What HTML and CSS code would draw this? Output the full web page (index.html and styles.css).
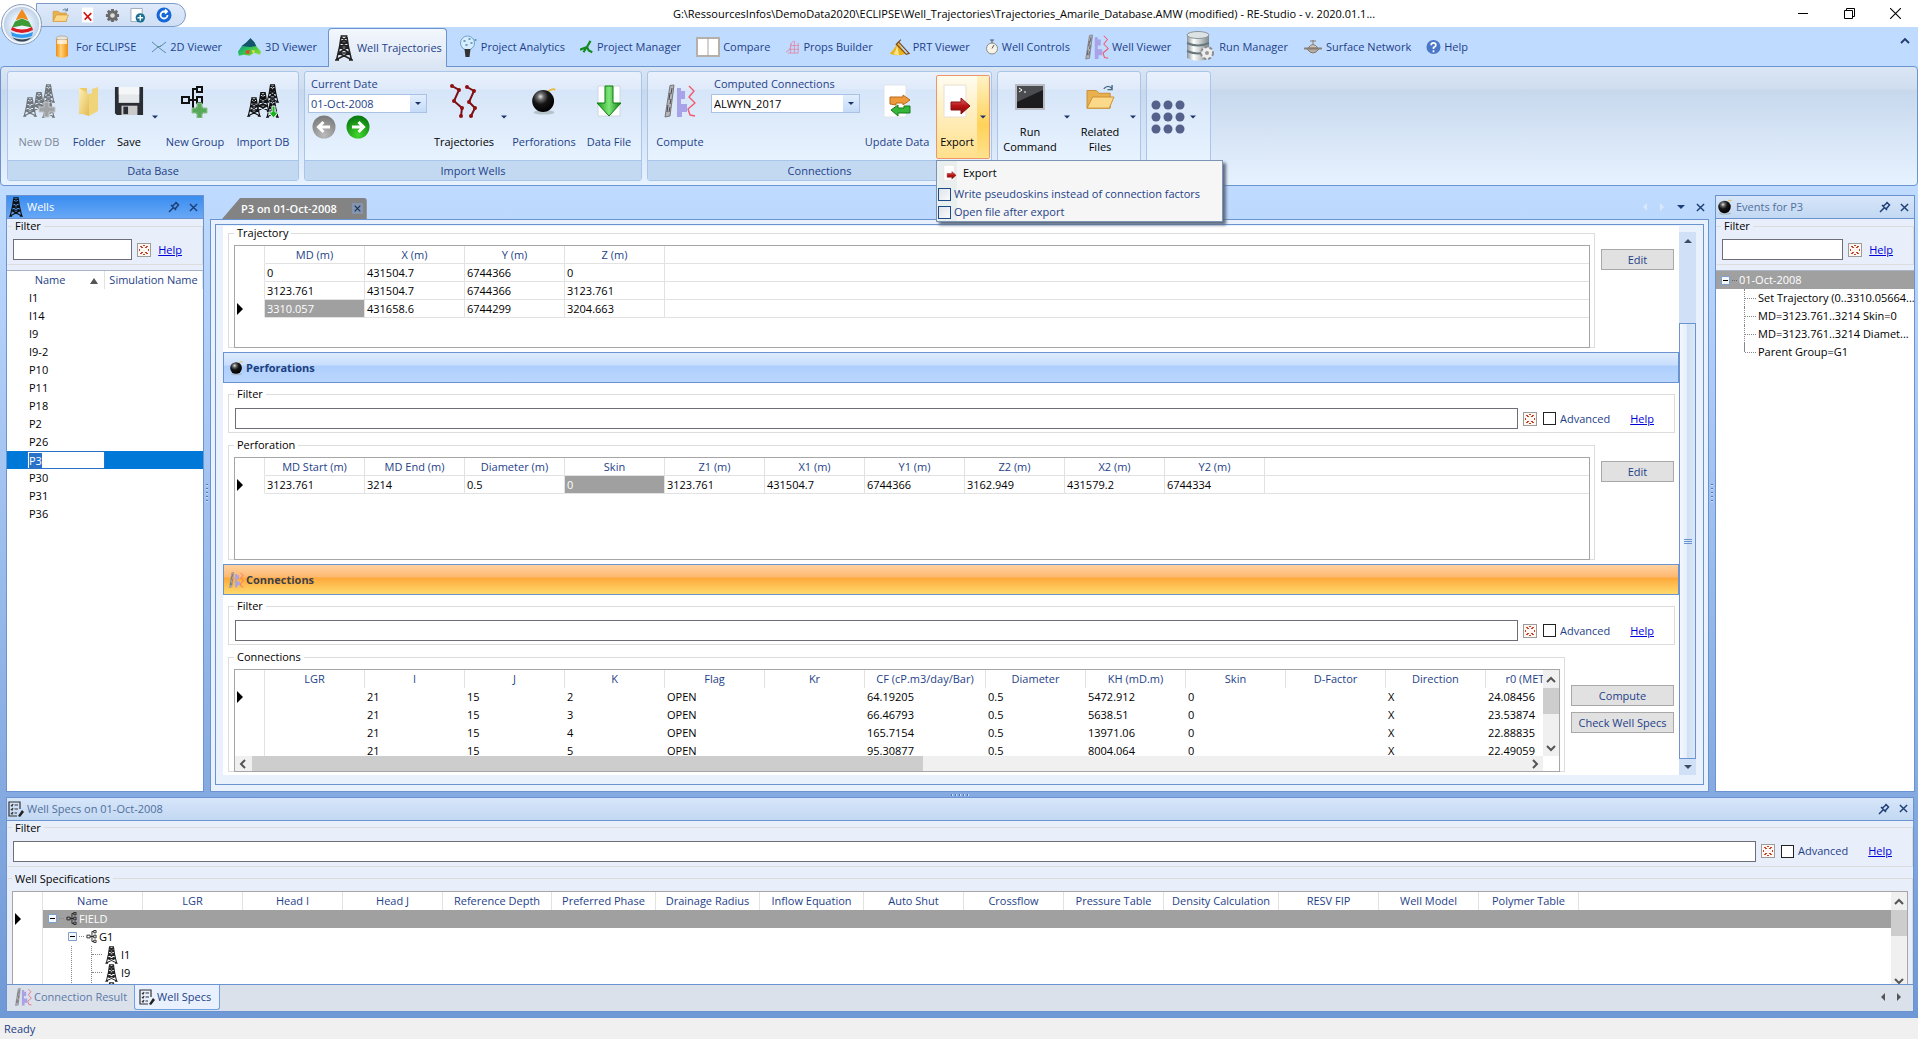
FILE: index.html
```html
<!DOCTYPE html>
<html lang="en">
<head>
<meta charset="utf-8">
<title>RE-Studio</title>
<link rel="stylesheet" href="styles.css">
</head>
<body>

<svg class="defs" aria-hidden="true">
  <defs>
    <radialGradient id="gBall" cx=".38" cy=".3" r=".7"><stop offset="0" stop-color="#e4e4e4"/><stop offset=".22" stop-color="#6a6a6a"/><stop offset=".5" stop-color="#161616"/><stop offset="1" stop-color="#000"/></radialGradient>
    <linearGradient id="gFolder" x1="0" y1="0" x2="1" y2="1"><stop offset="0" stop-color="#fdf0b8"/><stop offset="1" stop-color="#e3bb50"/></linearGradient>
    <linearGradient id="gRed" x1="0" y1="0" x2="0" y2="1"><stop offset="0" stop-color="#e06a6a"/><stop offset=".5" stop-color="#b81414"/><stop offset="1" stop-color="#7c0808"/></linearGradient>
    <linearGradient id="gGreen" x1="0" y1="0" x2="1" y2="0"><stop offset="0" stop-color="#169a16"/><stop offset=".5" stop-color="#7fe67a"/><stop offset="1" stop-color="#0d7f10"/></linearGradient>
    <linearGradient id="gSilver" x1="0" y1="0" x2="1" y2="0"><stop offset="0" stop-color="#8d9598"/><stop offset=".3" stop-color="#fff"/><stop offset="1" stop-color="#7f898c"/></linearGradient>
    <linearGradient id="gOrange" x1="0" y1="0" x2="1" y2="0"><stop offset="0" stop-color="#ef8b12"/><stop offset=".4" stop-color="#ffd27a"/><stop offset="1" stop-color="#f08d10"/></linearGradient>
    <radialGradient id="gGreenBall" cx=".5" cy=".85" r=".8"><stop offset="0" stop-color="#43d62c"/><stop offset="1" stop-color="#0a7a12"/></radialGradient>
    <radialGradient id="gGrayBall" cx=".5" cy=".85" r=".8"><stop offset="0" stop-color="#bbb"/><stop offset="1" stop-color="#7c7c7c"/></radialGradient>
    <linearGradient id="gMesh" x1="0" y1="0" x2="1" y2="1"><stop offset="0" stop-color="#1c6fae"/><stop offset=".5" stop-color="#28c05a"/><stop offset="1" stop-color="#9be02a"/></linearGradient>
  </defs>
  <symbol id="rig" viewBox="0 0 18 26"><g fill="none" stroke="currentColor" stroke-width="1.500"><path d="M5.500 1h7M6 2 4.500 12 1.500 25M12 2l1.500 10 3 13M5.500 7h7M4.500 12h9M3.500 18h11M6 2l6.500 5M12 2 5.500 7M5.500 7l8 5M12.500 7l-8 5M4.500 12l10 6M13.500 12l-10 6M3.500 18l12 6M14.500 18l-12 6M0 25h4M14 25h4"/></g></symbol>
  <symbol id="rigs" viewBox="0 0 34 34"><use href="#rig" x="20" y="0" width="13" height="19"/><use href="#rig" x="20" y="15" width="13" height="19"/><use href="#rig" x="10" y="6" width="14" height="24"/><use href="#rig" x="1" y="13" width="14" height="20"/></symbol>
  <symbol id="rigs-add" viewBox="0 0 34 34"><g color="#6f7478"><use href="#rigs"/></g><path d="M22 18h5v5h6v5h-6v5h-5v-5h-5v-5h5z" fill="#a0a3a6" stroke="#c5c8ca"/></symbol>
  <symbol id="rigs-down" viewBox="0 0 34 34"><use href="#rigs"/><path d="M26 22h3v6h3.500L27.500 34l-5-6H26z" fill="#18b418" stroke="#e8f2ff"/></symbol>
  <symbol id="conn" viewBox="0 0 32 34"><path d="M6 1.500l4-.5-4 31-5 1z" fill="#b4b4b8" stroke="#77777c"/><path d="M8 4l-1 6M6 9l-1 7M7 15l-1 5M4 21l-1 7M6 23l-1 5" stroke="#4a4a50"/><path d="M13 4h4v3h4v8h-4v5h6v8h-5v5h-5z" fill="#a8a2e8"/><path d="M25 2l5 5-5 6 6 6-7 6 2 6 5 1" fill="none" stroke="#f25a70" stroke-width="1.400" stroke-linejoin="round"/></symbol>
  <symbol id="bomb" viewBox="0 0 32 32"><ellipse cx="16" cy="29" rx="12" ry="2.500" fill="#9aa" opacity=".6"/><path d="M21 5q4-4 8-2" fill="none" stroke="#eab73c" stroke-width="2"/><circle cx="15" cy="16" r="12.500" fill="url(#gBall)"/></symbol>
  <symbol id="folder" viewBox="0 0 26 32"><path d="M3 3h8v26H3z" fill="#ecca64"/><path d="M3 3l10 6v22L3 28z" fill="url(#gFolder)"/><path d="M13 9l3-1V4l6-2v24l-9 5z" fill="#f0d47a"/></symbol>
  <symbol id="folder-open" viewBox="0 0 32 28"><path d="M2 26V7h10l3 3h12v16z" fill="#e8b04e" stroke="#c98d2c"/><path d="M2 26 8 14h23l-5 12z" fill="#fbd98b" stroke="#c98d2c"/><path d="M20 5q5-5 9 0m0-4v5h-5" fill="none" stroke="#456a86" stroke-width="1.500"/></symbol>
  <symbol id="floppy" viewBox="0 0 32 32"><path d="M1 1h30v30H3l-2-2z" fill="#2b2d35"/><path d="M5 1h22v17H5z" fill="#e4e8ea"/><path d="M5 1h22v8H5z" fill="#fff" opacity=".6"/><path d="M8 21h17v10H8z" fill="#c9c9c9"/><path d="M10 22h5v8h-5z" fill="#2b2d35"/></symbol>
  <symbol id="tree" viewBox="0 0 24 30"><g fill="none" stroke="currentColor" stroke-width="2"><path d="M2 12h7v6H2zM17 2h5v5h-5zM17 12h5v6h-5zM17 23h5v5h-5zM9 15h8M17 4h-4v22h4"/></g></symbol>
  <symbol id="tree-add" viewBox="0 0 30 34"><use href="#tree" width="24" height="32"/><path d="M17 19h5v5h5v5h-5v5h-5v-5h-5v-5h5z" fill="#58a85a" stroke="#8fc48f"/></symbol>
  <symbol id="traj" viewBox="0 0 30 34"><g fill="#8f1010" stroke="#7c1014" stroke-width="2"><path d="M3 2l7 4-5 11 8 7-1 8M18 3l7 4-5 11 6 6-4 8" fill="none"/></g><g fill="#8f1010"><circle cx="3" cy="2" r="2"/><circle cx="10" cy="6" r="2"/><circle cx="5" cy="17" r="2"/><circle cx="13" cy="24" r="2"/><circle cx="12" cy="32" r="2"/><circle cx="18" cy="3" r="2"/><circle cx="25" cy="7" r="2"/><circle cx="20" cy="18" r="2"/><circle cx="26" cy="24" r="2"/><circle cx="22" cy="32" r="2"/></g></symbol>
  <symbol id="data-file" viewBox="0 0 30 32"><path d="M4 1h22v30H4z" fill="#fff" stroke="#d0d6de"/><path d="M11 1h8v17h8L15 31 3 18h8z" fill="url(#gGreen)" stroke="#0c7c10"/></symbol>
  <symbol id="update" viewBox="0 0 30 34"><path d="M2 1h22v32H2z" fill="#fff" stroke="#dfe4ea"/><path d="M8 20v-7h13v-2l7 5-7 5v-2h-7v2z" fill="#ef9a3a" stroke="#b8691a"/><path d="M28 22v7H16v3l-7-6 7-5v3h6v-2z" fill="#35b53a" stroke="#167a1a"/></symbol>
  <symbol id="export" viewBox="0 0 28 34"><path d="M1 1h22v32H1z" fill="#fff" stroke="#e6e0d2"/><path d="M8 18h10v-4l9 8-9 8v-4H8z" fill="url(#gRed)" stroke="#8a1212"/></symbol>
  <symbol id="console" viewBox="0 0 30 26"><path d="M1 1h28v24H1z" fill="#1c1c1e" stroke="#b9bcc2" stroke-width="2"/><path d="M2 18 28 6V2H2z" fill="#4a4c50"/><path d="M4 4l3 2-3 2M9 8h2" stroke="#fff" fill="none"/></symbol>
  <symbol id="dots" viewBox="0 0 34 34"><g fill="#55618a"><circle cx="5" cy="5" r="4.500"/><circle cx="17" cy="5" r="4.500"/><circle cx="29" cy="5" r="4.500"/><circle cx="5" cy="17" r="4.500"/><circle cx="17" cy="17" r="4.500"/><circle cx="29" cy="17" r="4.500"/><circle cx="5" cy="29" r="4.500"/><circle cx="17" cy="29" r="4.500"/><circle cx="29" cy="29" r="4.500"/></g></symbol>
  <symbol id="specs" viewBox="0 0 16 16"><g fill="none" stroke="#333" stroke-width="1.200"><path d="M12 8V1H1v14h8M3 4l1 1 1-2M6.500 4H10M3 8l1 1 1-2M6.500 8H10M3 12l1 1 1-2M6.500 12H9"/></g><path d="M14 9l2 2-4 5-2-1z" fill="#222"/></symbol>
  <symbol id="pin" viewBox="0 0 12 12"><path d="M7.500 1l3.500 3.500M3 4l5 5M5 7 1 11M4.500 5l4-3.500M7 8l3.500-4" stroke="currentColor" stroke-width="1.500" fill="none"/></symbol>
  <symbol id="close" viewBox="0 0 10 10"><path d="M1 1l8 8M9 1 1 9" stroke="currentColor" stroke-width="1.600" fill="none"/></symbol>
  <symbol id="clear" viewBox="0 0 12 12"><path d="M0 0h12v12H0z" fill="#fff6f2"/><g fill="#c0452a"><path d="M2 2h2v1H2zM3 3h2v1H3zM8 2h2v1H8zM7 3h2v1H7zM5 1h2v1H5zM1 5h1v2H1zM10 5h1v2h-1zM3 8h2v1H3zM2 9h2v1H2zM7 8h2v1H7zM8 9h2v1H8zM5 10h2v1H5z"/></g></symbol>
  <symbol id="chev" viewBox="0 0 10 8"><path d="M1 6l4-4 4 4" stroke="#555" stroke-width="2" fill="none"/></symbol>
  <symbol id="tri" viewBox="0 0 8 4"><path d="M0 0h8L4 4z" fill="currentColor"/></symbol>
  <symbol id="marker" viewBox="0 0 6 12"><path d="M0 0l6 6-6 6z" fill="#000"/></symbol>
  <symbol id="minus" viewBox="0 0 9 9"><path d="M.5.5h8v8h-8z" fill="#f4f8fd" stroke="#7ba0d0"/><path d="M2 4.500h5" stroke="#000"/></symbol>
</svg>

<header class="titlebar">
  <button class="orb" aria-label="Application menu">
    <svg viewBox="0 0 24 34" width="24" height="34"><path d="M12 1q4 6 6.500 11.500L12 10l-6.500 2.500Q8 7 12 1z" fill="#f38a1c"/><path d="M12 10.500l7 3 3 6-10-2-10 2 3-6z" fill="#3d9a36"/><path d="M2 19q10 5 20 0l1 3q-11 6-22 0z" fill="#dc1c24"/><path d="M1 24q11 5 22 0l-1 4q-10 4-20 0z" fill="#2f9af0"/><path d="M2.500 29.500q9.500 4 19 0Q17 34 12 33.500 7 34 2.500 29.500z" fill="#35434e"/></svg>
  </button>
  <nav class="qat" aria-label="Quick access">
    <button aria-label="Open"><svg width="17" height="16"><use href="#folder-open"/></svg></button>
    <button aria-label="Close file"><svg viewBox="0 0 16 16" width="15" height="16"><path d="M2 0h12v16H2z" fill="#fff"/><path d="M4 5l8 9M12 6 5 13" stroke="#d01818" stroke-width="1.800"/></svg></button>
    <button aria-label="Settings"><svg viewBox="0 0 16 16" width="15" height="15"><path d="M8 1v14M1 8h14M3 3l10 10M13 3 3 13" stroke="#6b6b6b" stroke-width="3"/><circle cx="8" cy="8" r="4" fill="#ddd" stroke="#6b6b6b" stroke-width="3"/></svg></button>
    <button aria-label="Add page"><svg viewBox="0 0 16 16" width="15" height="16"><path d="M1 1h12v14H1z" fill="#fff" stroke="#9aa7b5"/><circle cx="11" cy="11" r="5" fill="#1b6f8e"/><path d="M11 8v6M8 11h6" stroke="#fff" stroke-width="1.500"/></svg></button>
    <button aria-label="Refresh"><svg viewBox="0 0 16 16" width="16" height="16"><circle cx="8" cy="8" r="7.500" fill="#1767d8"/><path d="M11.500 8A3.500 3.500 0 1 1 8 4.500h3M9 2.500l2 2-2 2" stroke="#fff" stroke-width="1.800" fill="none"/></svg></button>
  </nav>
  <h1 class="title">G:\RessourcesInfos\DemoData2020\ECLIPSE\Well_Trajectories\Trajectories_Amarile_Database.AMW (modified) - RE-Studio - v. 2020.01.1...</h1>
  <div class="winctl">
    <button aria-label="Minimize"><svg viewBox="0 0 10 10" width="10" height="10"><path d="M0 5.500h10" stroke="#000"/></svg></button>
    <button aria-label="Restore"><svg viewBox="0 0 11 11" width="11" height="11"><path d="M.5 2.500h8v8h-8zM2.500 2V.500h8v8H9" stroke="#000" fill="none"/></svg></button>
    <button aria-label="Close"><svg viewBox="0 0 10 10" width="11" height="11"><path d="M0 0l10 10M10 0 0 10" stroke="#000"/></svg></button>
  </div>
</header>

<nav class="tabs" aria-label="Ribbon tabs">
  <button class="tab"><svg viewBox="0 0 20 24" width="20" height="24"><path d="M3 3h12v18q-6 4-12 0z" fill="url(#gOrange)"/><ellipse cx="9" cy="3" rx="6" ry="2" fill="#e9e4da" stroke="#b9b0a0"/><path d="M4 5h10v4H4z" fill="#fff" opacity=".7"/></svg>For ECLIPSE</button>
  <button class="tab"><svg viewBox="0 0 16 12" width="16" height="12"><path d="M1 1l6 5 3-1 5-4M1 11l6-5 8 6M7 6l3-1" fill="none" stroke="#5d8c9b"/></svg>2D Viewer</button>
  <button class="tab"><svg viewBox="0 0 26 20" width="25" height="20"><path d="M1 15 5 9l5-4 4-4 4 4 2 4 5 6-1 3-6-2-5 3-6-1-5 1z" fill="url(#gMesh)"/><path d="M5 9l5-4 4-4 4 4 2 4-6 1z" fill="#16536c"/><path d="M9 14l4-1v4H9z" fill="#e04a20"/><path d="M15 13l4 1-2 3z" fill="#e8e23c"/></svg>3D Viewer</button>
  <button class="tab tab-on"><svg width="18" height="26"><use href="#rig"/></svg>Well Trajectories</button>
  <button class="tab"><svg viewBox="0 0 18 24" width="19" height="24"><circle cx="8" cy="8" r="7" fill="#d7ecff" stroke="#6fa3c4"/><path d="M4 6h2M9 4h2M6 10h2M11 8h2M15 5h2" stroke="#3f86a8" stroke-width="1.500"/><path d="M5 14h6l-1 8H6z" fill="#333"/></svg>Project Analytics</button>
  <button class="tab"><svg viewBox="0 0 16 16" width="14" height="16"><path d="M12 1 8 8M8 8 0 11M8 8l2 4 4 2M7 9l-3 5" stroke="#158a1e" stroke-width="2.500" fill="none"/></svg>Project Manager</button>
  <button class="tab"><svg viewBox="0 0 24 20" width="24" height="20"><path d="M1 1h22v18H1z" fill="#fff" stroke="#b5b0aa" stroke-width="2"/><path d="M12 1v18" stroke="#a9a49e"/></svg>Compare</button>
  <button class="tab"><svg viewBox="0 0 16 16" width="15" height="15"><path d="M1 14q5-2 5-6t3-6M3 15h11M4 11h11M6 7h9M6 15V5M10 15V2M14 15V4" stroke="#dd8fae" fill="none"/></svg>Props Builder</button>
  <button class="tab"><svg viewBox="0 0 24 20" width="22" height="20"><path d="M10 6q-3 7-8 11 8 4 18 0-5-4-8-11z" fill="#e8b31c"/><path d="M10 8q-1 6-4 10l6 1z" fill="#f9e68a"/><path d="M14 2 9 7l11 11 3-1L12 5" stroke="#7b4a1c" stroke-width="1.300" fill="none"/></svg>PRT Viewer</button>
  <button class="tab"><svg viewBox="0 0 14 16" width="14" height="16"><circle cx="7" cy="9.500" r="5.500" fill="#f6f3e8" stroke="#8d8a80"/><path d="M7 4V1M5 1h4M7 9.500 9 6" stroke="#556" fill="none"/></svg>Well Controls</button>
  <button class="tab"><svg width="24" height="26"><use href="#conn"/></svg>Well Viewer</button>
  <button class="tab"><svg viewBox="0 0 30 32" width="30" height="32"><path d="M1 4v23q11 6 22 0V4z" fill="url(#gSilver)"/><ellipse cx="12" cy="4" rx="11" ry="3.500" fill="#dde3e5" stroke="#8c9598"/><path d="M1 12q11 5 22 0M1 20q11 5 22 0" stroke="#68787d" stroke-width="2" fill="none"/><circle cx="21" cy="22" r="6" fill="#eee" stroke="#8d8d8d" stroke-width="2" stroke-dasharray="3 2"/><circle cx="21" cy="22" r="2" fill="#999"/></svg>Run Manager</button>
  <button class="tab"><svg viewBox="0 0 20 16" width="20" height="16"><path d="M10 1v4M7 2h6" stroke="#8a7c72"/><path d="M5 9q5-7 10 0z" fill="#cdc7c1" stroke="#857a70"/><path d="M1 9.500h18" stroke="#8b8178" stroke-width="2"/><path d="M4 10q6 8 12 0z" fill="#b5ada4" stroke="#857a70"/></svg>Surface Network</button>
  <button class="tab"><svg viewBox="0 0 16 16" width="15" height="16"><circle cx="8" cy="8" r="7.500" fill="#4a78c8"/><path d="M5.500 6q0-2.500 2.500-2.500T10.500 6Q10.500 7.500 8 8.500V10M8 11.500v2" stroke="#fff" stroke-width="1.800" fill="none"/></svg>Help</button>
  <button class="collapse" aria-label="Collapse ribbon"><svg viewBox="0 0 10 7" width="10" height="7"><path d="M1 6l4-4 4 4" stroke="#1e3c6e" stroke-width="1.800" fill="none"/></svg></button>
</nav>

<section class="ribbon">
  <div class="group">
    <div class="group-body">
      <button class="rb w60 off"><svg width="34" height="34"><use href="#rigs-add"/></svg><span>New DB</span></button>
      <button class="rb w40"><svg width="26" height="34"><use href="#folder"/></svg><span>Folder</span></button>
      <button class="rb w40 dark"><svg width="30" height="34"><use href="#floppy"/></svg><span>Save</span></button>
      <button class="drop" aria-label="Save options"><svg width="6" height="4"><use href="#tri"/></svg></button>
      <button class="rb w68"><svg width="30" height="34"><use href="#tree-add"/></svg><span>New Group</span></button>
      <button class="rb w68"><svg width="34" height="34"><use href="#rigs-down"/></svg><span>Import DB</span></button>
    </div>
    <div class="caption">Data Base</div>
  </div>
  <div class="group">
    <div class="group-body">
      <div class="field">
        <label for="date">Current Date</label>
        <span class="combo blue"><select id="date"><option>01-Oct-2008</option></select></span>
        <div class="nav">
          <button aria-label="Previous date"><svg viewBox="0 0 24 24" width="24" height="24"><circle cx="12" cy="12" r="11.500" fill="url(#gGrayBall)"/><path d="M18 12H7M11.500 7 6.500 12l5 5" stroke="#fff" stroke-width="3" fill="none"/></svg></button>
          <button aria-label="Next date"><svg viewBox="0 0 24 24" width="24" height="24"><circle cx="12" cy="12" r="11.500" fill="url(#gGreenBall)"/><path d="M6 12h11M12.500 7l5 5-5 5" stroke="#fff" stroke-width="3" fill="none"/></svg></button>
        </div>
      </div>
      <button class="rb w68 dark"><svg width="30" height="34"><use href="#traj"/></svg><span>Trajectories</span></button>
      <button class="drop" aria-label="Trajectories options"><svg width="6" height="4"><use href="#tri"/></svg></button>
      <button class="rb w68"><svg width="28" height="34"><use href="#bomb"/></svg><span>Perforations</span></button>
      <button class="rb w62"><svg width="30" height="34"><use href="#data-file"/></svg><span>Data File</span></button>
    </div>
    <div class="caption">Import Wells</div>
  </div>
  <div class="group">
    <div class="group-body">
      <button class="rb w62"><svg width="32" height="34"><use href="#conn"/></svg><span>Compute</span></button>
      <div class="field field-wide">
        <label for="computed">Computed Connections</label>
        <span class="combo"><select id="computed"><option>ALWYN_2017</option></select></span>
      </div>
      <button class="rb w68"><svg width="30" height="34"><use href="#update"/></svg><span>Update Data</span></button>
      <div class="split">
        <button class="rb w40 dark"><svg width="28" height="34"><use href="#export"/></svg><span>Export</span></button>
        <button class="drop" aria-label="Export options"><svg width="6" height="4"><use href="#tri"/></svg></button>
        <div class="menu">
          <button class="menu-item"><svg width="14" height="16"><use href="#export"/></svg>Export</button>
          <label class="menu-check"><input type="checkbox">Write pseudoskins instead of connection factors</label>
          <label class="menu-check"><input type="checkbox">Open file after export</label>
        </div>
      </div>
    </div>
    <div class="caption">Connections</div>
  </div>
  <div class="group">
    <div class="group-body two-line">
      <button class="rb w62 dark"><svg width="30" height="26"><use href="#console"/></svg><span>Run<br>Command</span></button>
      <button class="drop" aria-label="Run command options"><svg width="6" height="4"><use href="#tri"/></svg></button>
      <button class="rb w54 dark"><svg width="30" height="26"><use href="#folder-open"/></svg><span>Related<br>Files</span></button>
      <button class="drop" aria-label="Related files options"><svg width="6" height="4"><use href="#tri"/></svg></button>
    </div>
    <div class="caption"></div>
  </div>
  <div class="group">
    <div class="group-body apps">
      <button class="apps-button" aria-label="Applications"><svg width="34" height="34"><use href="#dots"/></svg><svg width="6" height="4"><use href="#tri"/></svg></button>
    </div>
  </div>
</section>

<main class="workspace">
  <div class="upper">
    <aside class="panel wells">
      <header class="panel-head active"><svg class="head-icon" width="16" height="20"><use href="#rig"/></svg><h2>Wells</h2>
        <button aria-label="Pin"><svg width="12" height="12"><use href="#pin"/></svg></button><button aria-label="Close"><svg width="9" height="9"><use href="#close"/></svg></button></header>
      <fieldset class="box filter"><legend>Filter</legend>
        <div class="filter-row"><input type="text" aria-label="Filter wells"><button class="clear" aria-label="Clear"><svg width="12" height="12"><use href="#clear"/></svg></button><a href="#">Help</a></div>
      </fieldset>
      <div class="list">
        <table class="names">
          <colgroup><col class="half"><col></colgroup>
          <thead><tr><th>Name <svg class="sort" viewBox="0 0 8 6" width="8" height="6"><path d="M0 6h8L4 0z" fill="#555"/></svg></th><th>Simulation Name</th></tr></thead>
          <tbody>
            <tr><td>I1</td><td></td></tr>
            <tr><td>I14</td><td></td></tr>
            <tr><td>I9</td><td></td></tr>
            <tr><td>I9-2</td><td></td></tr>
            <tr><td>P10</td><td></td></tr>
            <tr><td>P11</td><td></td></tr>
            <tr><td>P18</td><td></td></tr>
            <tr><td>P2</td><td></td></tr>
            <tr><td>P26</td><td></td></tr>
            <tr class="picked"><td><input id="rename" type="text" value="P3" aria-label="Well name"></td><td></td></tr>
            <tr><td>P30</td><td></td></tr>
            <tr><td>P31</td><td></td></tr>
            <tr><td>P36</td><td></td></tr>
          </tbody>
        </table>
      </div>
    </aside>

    <div class="grip"></div>

    <section class="doc">
      <div class="doc-tabs">
        <div class="doc-tab"><span>P3 on 01-Oct-2008</span><button aria-label="Close tab"><svg width="7" height="7"><use href="#close"/></svg></button></div>
        <div class="doc-nav">
          <button class="pale" aria-label="Scroll left"><svg viewBox="0 0 4 8" width="4" height="8"><path d="M4 0v8L0 4z" fill="currentColor"/></svg></button>
          <button class="pale" aria-label="Scroll right"><svg viewBox="0 0 4 8" width="4" height="8"><path d="M0 0v8l4-4z" fill="currentColor"/></svg></button>
          <button aria-label="Documents"><svg width="8" height="4"><use href="#tri"/></svg></button>
          <button aria-label="Close"><svg width="9" height="9"><use href="#close"/></svg></button>
        </div>
      </div>
      <div class="doc-frame"><div class="doc-inner">
        <div class="doc-body">
          <div class="section">
            <fieldset class="box"><legend>Trajectory</legend>
              <div class="grid">
                <table class="lined">
                  <colgroup><col class="sel"><col class="c100"><col class="c100"><col class="c100"><col class="c100"><col></colgroup>
                  <thead><tr><th></th><th>MD (m)</th><th>X (m)</th><th>Y (m)</th><th>Z (m)</th><th></th></tr></thead>
                  <tbody>
                    <tr><td></td><td>0</td><td>431504.7</td><td>6744366</td><td>0</td><td></td></tr>
                    <tr><td></td><td>3123.761</td><td>431504.7</td><td>6744366</td><td>3123.761</td><td></td></tr>
                    <tr><td><svg width="6" height="12"><use href="#marker"/></svg></td><td class="cell-on">3310.057</td><td>431658.6</td><td>6744299</td><td>3204.663</td><td></td></tr>
                  </tbody>
                </table>
              </div>
            </fieldset>
            <div class="actions one"><button class="btn">Edit</button></div>
          </div>

          <h3 class="bar"><svg width="15" height="16"><use href="#bomb"/></svg>Perforations</h3>
          <fieldset class="box filter inset"><legend>Filter</legend>
            <div class="filter-row"><input type="text" aria-label="Filter perforations"><button class="clear" aria-label="Clear"><svg width="12" height="12"><use href="#clear"/></svg></button><label><input type="checkbox">Advanced</label><a href="#">Help</a></div>
          </fieldset>
          <div class="section">
            <fieldset class="box"><legend>Perforation</legend>
              <div class="grid">
                <table class="lined">
                  <colgroup><col class="sel"><col class="c100"><col class="c100"><col class="c100"><col class="c100"><col class="c100"><col class="c100"><col class="c100"><col class="c100"><col class="c100"><col class="c100"><col></colgroup>
                  <thead><tr><th></th><th>MD Start (m)</th><th>MD End (m)</th><th>Diameter (m)</th><th>Skin</th><th>Z1 (m)</th><th>X1 (m)</th><th>Y1 (m)</th><th>Z2 (m)</th><th>X2 (m)</th><th>Y2 (m)</th><th></th></tr></thead>
                  <tbody><tr><td><svg width="6" height="12"><use href="#marker"/></svg></td><td>3123.761</td><td>3214</td><td>0.5</td><td class="cell-on">0</td><td>3123.761</td><td>431504.7</td><td>6744366</td><td>3162.949</td><td>431579.2</td><td>6744334</td><td></td></tr></tbody>
                </table>
              </div>
            </fieldset>
            <div class="actions one"><button class="btn">Edit</button></div>
          </div>

          <h3 class="bar bar-on"><svg width="15" height="16"><use href="#conn"/></svg>Connections</h3>
          <fieldset class="box filter inset"><legend>Filter</legend>
            <div class="filter-row"><input type="text" aria-label="Filter connections"><button class="clear" aria-label="Clear"><svg width="12" height="12"><use href="#clear"/></svg></button><label><input type="checkbox">Advanced</label><a href="#">Help</a></div>
          </fieldset>
          <div class="section">
            <fieldset class="box"><legend>Connections</legend>
              <div class="grid scrolled">
                <div class="view">
                  <table class="plain wide">
                    <colgroup><col class="sel"><col class="c100"><col class="c100"><col class="c100"><col class="c100"><col class="c100"><col class="c100"><col class="c121"><col class="c100"><col class="c100"><col class="c100"><col class="c100"><col class="c100"><col class="c100"></colgroup>
                    <thead><tr><th></th><th>LGR</th><th>I</th><th>J</th><th>K</th><th>Flag</th><th>Kr</th><th>CF (cP.m3/day/Bar)</th><th>Diameter</th><th>KH (mD.m)</th><th>Skin</th><th>D-Factor</th><th>Direction</th><th>r0 (METRES)</th></tr></thead>
                    <tbody>
                      <tr><td><svg width="6" height="12"><use href="#marker"/></svg></td><td></td><td>21</td><td>15</td><td>2</td><td>OPEN</td><td></td><td>64.19205</td><td>0.5</td><td>5472.912</td><td>0</td><td></td><td>X</td><td>24.08456</td></tr>
                      <tr><td></td><td></td><td>21</td><td>15</td><td>3</td><td>OPEN</td><td></td><td>66.46793</td><td>0.5</td><td>5638.51</td><td>0</td><td></td><td>X</td><td>23.53874</td></tr>
                      <tr><td></td><td></td><td>21</td><td>15</td><td>4</td><td>OPEN</td><td></td><td>165.7154</td><td>0.5</td><td>13971.06</td><td>0</td><td></td><td>X</td><td>22.88835</td></tr>
                      <tr><td></td><td></td><td>21</td><td>15</td><td>5</td><td>OPEN</td><td></td><td>95.30877</td><td>0.5</td><td>8004.064</td><td>0</td><td></td><td>X</td><td>22.49059</td></tr>
                    </tbody>
                  </table>
                </div>
                <div class="vscroll"><svg width="10" height="8"><use href="#chev"/></svg><i class="thumb-v"></i><svg class="down" width="10" height="8"><use href="#chev"/></svg></div>
                <div class="hscroll"><svg class="left" width="10" height="8"><use href="#chev"/></svg><i class="thumb-h"></i><svg class="right" width="10" height="8"><use href="#chev"/></svg></div>
              </div>
            </fieldset>
            <div class="actions pair"><button class="btn">Compute</button><button class="btn">Check Well Specs</button></div>
          </div>
        </div>
        <div class="doc-scroll"><svg class="up" width="8" height="4"><use href="#tri"/></svg><i></i><svg width="8" height="4"><use href="#tri"/></svg></div>
      </div></div>
    </section>

    <div class="grip"></div>

    <aside class="panel events">
      <header class="panel-head"><svg class="head-icon" width="16" height="18"><use href="#bomb"/></svg><h2>Events for P3</h2>
        <button aria-label="Pin"><svg width="12" height="12"><use href="#pin"/></svg></button><button aria-label="Close"><svg width="9" height="9"><use href="#close"/></svg></button></header>
      <fieldset class="box filter"><legend>Filter</legend>
        <div class="filter-row"><input type="text" aria-label="Filter events"><button class="clear" aria-label="Clear"><svg width="12" height="12"><use href="#clear"/></svg></button><a href="#">Help</a></div>
      </fieldset>
      <div class="list">
        <div class="node"><svg width="9" height="9"><use href="#minus"/></svg><i></i>01-Oct-2008</div>
        <ul class="leaves">
          <li>Set Trajectory (0..3310.05664...</li>
          <li>MD=3123.761..3214 Skin=0</li>
          <li>MD=3123.761..3214 Diamet...</li>
          <li>Parent Group=G1</li>
        </ul>
      </div>
    </aside>
  </div>

  <div class="grip-h"></div>

  <section class="panel lower">
    <header class="panel-head"><svg class="head-icon" width="16" height="16"><use href="#specs"/></svg><h2>Well Specs on 01-Oct-2008</h2>
      <button aria-label="Pin"><svg width="12" height="12"><use href="#pin"/></svg></button><button aria-label="Close"><svg width="9" height="9"><use href="#close"/></svg></button></header>
    <fieldset class="box filter"><legend>Filter</legend>
      <div class="filter-row"><input type="text" aria-label="Filter well specs"><button class="clear" aria-label="Clear"><svg width="12" height="12"><use href="#clear"/></svg></button><label><input type="checkbox">Advanced</label><a href="#">Help</a></div>
    </fieldset>
    <fieldset class="box specs"><legend>Well Specifications</legend>
      <div class="grid scrolled">
        <div class="view">
          <table class="plain">
            <colgroup><col class="sel"><col class="c100"><col class="c100"><col class="c100"><col class="c100"><col class="c109"><col class="c104"><col class="c104"><col class="c104"><col class="c100"><col class="c100"><col class="c100"><col class="c115"><col class="c100"><col class="c100"><col class="c100"><col></colgroup>
            <thead><tr><th></th><th>Name</th><th>LGR</th><th>Head I</th><th>Head J</th><th>Reference Depth</th><th>Preferred Phase</th><th>Drainage Radius</th><th>Inflow Equation</th><th>Auto Shut</th><th>Crossflow</th><th>Pressure Table</th><th>Density Calculation</th><th>RESV FIP</th><th>Well Model</th><th>Polymer Table</th><th></th></tr></thead>
            <tbody>
              <tr><td><svg width="6" height="12"><use href="#marker"/></svg></td><td colspan="16" class="row-on"><div class="tree-row"><svg width="9" height="9"><use href="#minus"/></svg><i></i><svg width="11" height="15"><use href="#tree"/></svg>FIELD</div></td></tr>
              <tr><td></td><td colspan="16"><div class="tree-row depth1"><svg width="9" height="9"><use href="#minus"/></svg><i></i><svg width="11" height="15"><use href="#tree"/></svg>G1</div></td></tr>
              <tr><td></td><td colspan="16"><div class="tree-row depth2"><i></i><svg width="15" height="18"><use href="#rig"/></svg>I1</div></td></tr>
              <tr><td></td><td colspan="16"><div class="tree-row depth2"><i></i><svg width="15" height="18"><use href="#rig"/></svg>I9</div></td></tr>
              <tr><td></td><td colspan="16"><div class="tree-row depth2"><i></i><svg width="15" height="18"><use href="#rig"/></svg></div></td></tr>
            </tbody>
          </table>
        </div>
        <div class="vscroll short"><svg width="10" height="8"><use href="#chev"/></svg><i class="thumb-v"></i><svg class="down" width="10" height="8"><use href="#chev"/></svg></div>
      </div>
    </fieldset>
    <footer class="panel-tabs">
      <button class="ptab"><svg width="17" height="18"><use href="#conn"/></svg>Connection Result</button>
      <button class="ptab ptab-on"><svg width="16" height="16"><use href="#specs"/></svg>Well Specs</button>
      <span class="ptab-nav"><button aria-label="Scroll left"><svg viewBox="0 0 4 8" width="4" height="8"><path d="M4 0v8L0 4z" fill="currentColor"/></svg></button><button aria-label="Scroll right"><svg viewBox="0 0 4 8" width="4" height="8"><path d="M0 0v8l4-4z" fill="currentColor"/></svg></button></span>
    </footer>
  </section>
</main>

<footer class="status">Ready</footer>
<script src="rename.js"></script>
</body>
</html>
```
FILE: rename.js
```js
// Open the well name editor with its text selected.
const rename = document.getElementById("rename");
rename.focus();
rename.select();
```
FILE: styles.css
```css
* { box-sizing: border-box; }

:root {
  --ink: #1e3f88;
  --line: #6b93cf;
  --pane: #e8effa;
  --hair: #dcdcdc;
}

body {
  margin: 0;
  min-height: 100vh;
  display: flex;
  flex-direction: column;
  font: 11px/14px "Open Sans", "Noto Sans", sans-serif;
  color: #000;
  background: #bfdbff;
}

button, input, select { font: inherit; color: inherit; }
button { border: 0; padding: 0; background: none; }
h1, h2, h3 { margin: 0; font-size: 11px; font-weight: 400; }
svg { display: block; flex: none; }
a { color: #0000d8; }
.defs { position: absolute; width: 0; height: 0; }

/* title bar */
.titlebar { position: relative; display: flex; align-items: center; height: 27px; background: #fff; }
.orb {
  position: absolute; left: 1px; top: 4px; z-index: 2;
  width: 41px; height: 41px; border-radius: 50%;
  display: flex; align-items: center; justify-content: center;
  border: 1px solid #8a9cb8;
  background: radial-gradient(circle, #e8f4ff 30%, #c3d3e8 62%, #f5faff 66%, #b5c5dc 100%);
}
.qat {
  display: flex; align-items: center; justify-content: space-around; align-self: flex-end;
  width: 150px; height: 24px; margin-left: 36px; padding: 0 8px 0 10px;
  border: 1px solid #7f9bc9; border-radius: 0 12px 12px 0;
  background: linear-gradient(#dfeafa, #cfdff5);
}
.title { flex: 1; padding-left: 82px; text-align: center; white-space: nowrap; overflow: hidden; }
.winctl { display: flex; }
.winctl button { width: 46px; display: flex; justify-content: center; }

/* ribbon tabs */
.tabs { display: flex; height: 39px; padding-left: 46px; background: #bfdbff; color: var(--ink); }
.tab { display: flex; align-items: center; gap: 3px; padding: 0 8px 0 7px; white-space: nowrap; }
.tab-on {
  margin: 1px 5px -1px 3px; padding: 0 4px 0 6px; gap: 4px; color: var(--ink);
  border: 1px solid var(--line); border-bottom: 0; border-radius: 4px 4px 0 0;
  background: linear-gradient(#f3f7fd, #dbe6f4); z-index: 1;
}
.tab-on svg { color: #222; }
.collapse { margin-left: auto; padding: 0 8px 12px; }

/* ribbon */
.ribbon {
  display: flex; align-items: flex-start; height: 120px; padding: 4px 6px 4px;
  gap: 5px; border: 1px solid var(--line); border-radius: 4px; color: var(--ink);
  background: linear-gradient(#dbe6f4 0, #cfddef 22px, #c7d8ed 23px, #e7f2ff 118px);
}
.group {
  display: flex; flex-direction: column; height: 110px;
  border: 1px solid #a9c5ea; border-radius: 3px;
  background: linear-gradient(#e9f1fc 0, #dfeafa 17px, #d6e5f8 18px, #e8f3ff 90px);
}
.group-body { flex: 1; display: flex; padding: 3px 1px 0; }
.caption { height: 20px; line-height: 19px; text-align: center; border-top: 1px solid #a9c5ea; background: #c3d9f1; }
.rb { display: flex; flex-direction: column; align-items: center; height: 84px; padding: 9px 0 10px; color: var(--ink); }
.rb svg { color: #111; }
.rb span { margin-top: auto; white-space: nowrap; }
.two-line .rb { padding: 9px 0 5px; }
.two-line .rb span { line-height: 15px; }
.dark { color: #000; }
.off { color: #7d8797; }
.w40 { width: 40px; }
.w54 { width: 54px; }
.w60 { width: 60px; }
.w62 { width: 62px; }
.w68 { width: 68px; }
.drop { width: 12px; height: 84px; padding-left: 3px; color: #1c3566; }
.field { width: 124px; padding-left: 2px; display: flex; flex-direction: column; color: var(--ink); }
.field label { padding: 2px 3px 3px; }
.field-wide { width: 152px; padding-left: 0; }
.combo { position: relative; display: block; height: 19px; margin-right: 3px; border: 1px solid #a9c1e4; background: #fff; color: #000; }
.combo.blue { color: var(--ink); }
.combo select { appearance: none; width: 100%; height: 17px; padding: 0 2px; border: 0; outline: 0; background: none; }
.combo::after {
  content: ""; position: absolute; right: 0; top: 0; width: 16px; height: 17px; pointer-events: none;
  background: linear-gradient(#e2eefe, #c5dbf7);
}
.combo::before {
  content: ""; position: absolute; right: 5px; top: 7px; z-index: 1; pointer-events: none;
  border: 3px solid transparent; border-top-color: #1c3566;
}
.nav { display: flex; gap: 10px; padding: 2px 4px; }
.split { position: relative; display: flex; margin-left: 5px; border: 1px solid #f0946a; border-radius: 2px; height: 84px; background: linear-gradient(#fffcf0, #fff0c4 40%, #ffe08c); }
.split .rb, .split .drop { height: 82px; }
.split .rb { padding: 8px 0 9px; }
.split .drop { background: linear-gradient(#fff2c6, #ffdc7c 40%, #ffd25a 60%, #ffe28e); }
.menu {
  position: absolute; left: -1px; top: 84px; z-index: 5; width: 287px; padding: 3px 1px 0;
  border: 1px solid #7d93b4; background: linear-gradient(90deg, #e9eeee 20px, #f6f6f6 20px);
  box-shadow: 3px 3px 3px #5d6b80;
}
.menu-item { display: flex; align-items: center; gap: 6px; height: 18px; margin-bottom: 3px; padding-left: 5px; color: #000; }
.menu-check { display: flex; align-items: center; gap: 3px; height: 18px; color: var(--ink); }
.menu-check input { appearance: none; width: 13px; height: 13px; margin: 0; border: 1px solid #1d4b86; background: linear-gradient(135deg, #dfe3ea, #fafafa); }
.apps { padding: 0; align-items: center; }
.apps-button { display: flex; align-items: center; gap: 5px; padding: 0 14px 18px 4px; color: #1c3566; }

/* workspace */
.workspace { flex: 1; display: flex; flex-direction: column; padding: 9px 3px 6px 6px; background: linear-gradient(#bfdbff, #6f98d6); }
.upper { flex: 1; display: flex; }
.panel { display: flex; flex-direction: column; border: 1px solid var(--line); background: var(--pane); min-width: 0; }
.wells { width: 198px; }
.events { width: 200px; }
.grip, .grip-h { background: repeating-linear-gradient(#4f78b8 0 1px, #cfe0fa 1px 2px, transparent 2px 4px) center / 2px 20px no-repeat; }
.grip { width: 6px; }
.grip-h { height: 5px; background-image: repeating-linear-gradient(90deg, #4f78b8 0 1px, #cfe0fa 1px 2px, transparent 2px 4px); background-size: 20px 2px; }
.panel-head { display: flex; align-items: center; gap: 3px; height: 23px; padding: 0 2px 0 1px; border-bottom: 1px solid var(--line); background: linear-gradient(#d7e6fa, #c2d8f2); color: #516f9c; }
.panel-head h2 { flex: 1; }
.panel-head button { width: 16px; display: flex; justify-content: center; color: #1e3f78; }
.panel-head .head-icon { color: #111; }
.active { background: linear-gradient(#3a8df0, #68a8f6); color: #fff; }

.box { margin: 0; padding: 5px 4px 0 5px; border: 1px solid var(--hair); min-width: 0; }
.box legend { padding: 0 3px; height: 14px; }
.filter { padding: 7px 20px 3px 6px; }
.filter legend { margin-left: -1px; }
.filter-row { display: flex; align-items: center; }
.filter-row input[type=text] { flex: 1; min-width: 0; height: 21px; border: 1px solid #6e6e78; padding: 0 2px; background: #fff; }
.filter-row label { display: flex; align-items: center; gap: 4px; margin: 0 20px 0 6px; color: var(--ink); }
.filter-row label input { appearance: none; width: 13px; height: 13px; margin: 0; border: 1px solid #222; background: #fff; }
.clear { width: 14px; height: 14px; margin-left: 5px; display: flex; align-items: center; justify-content: center; border: 1px solid #9c9c9c; background: #e8e4e2; }
.clear + a { margin-left: 7px; }
.panel > .box { border-left-color: var(--pane); }
.panel > .filter { margin-bottom: 5px; padding: 6px 20px 4px 5px; }

.list { flex: 1; border-top: 1px solid #a9b4c4; background: #fff; overflow: hidden; }
table { table-layout: fixed; width: 100%; border-collapse: separate; border-spacing: 0; }
th { height: 18px; padding: 0; font-weight: 400; color: var(--ink); border-right: 1px solid #e2e2e2; white-space: nowrap; overflow: hidden; }
td { height: 18px; padding: 0 0 0 2px; white-space: nowrap; }
.half { width: 98px; }
.names th:first-child { padding-left: 22px; }
.names .sort { display: inline-block; margin-left: 22px; }
.names td:first-child { padding-left: 22px; }
.picked td { background: #0078d7; }
.names .picked td:first-child { padding-left: 20px; }
#rename { display: block; width: 100%; height: 18px; padding: 0 1px; border: 1px solid #2a72c8; outline: 0; background: #fff; }
#rename::selection { background: #2a72c8; color: #fff; }

/* document */
.doc { flex: 1; display: flex; flex-direction: column; min-width: 0; }
.doc-tabs { display: flex; height: 24px; padding: 3px 4px 0 12px; align-items: stretch; justify-content: space-between; }
.doc-tab {
  display: flex; align-items: center; gap: 15px; padding: 0 4px 0 19px;
  background: #838383; color: #fff; font-weight: 600; border-radius: 0 3px 0 0;
  clip-path: polygon(18px 0, 100% 0, 100% 100%, 0 100%);
}
.doc-tab button { width: 11px; height: 11px; display: flex; align-items: center; justify-content: center; background: #8494ac; color: #12305e; }
.doc-nav { display: flex; align-items: center; gap: 11px; padding-bottom: 3px; color: #1e3f78; }
.doc-nav .pale { color: #d9e8fc; width: 6px; }
.doc-frame { flex: 1; display: flex; padding: 4px; padding-bottom: 6px; border: 1px solid var(--line); background: #e8f1fc; }
.doc-inner { flex: 1; display: flex; min-width: 0; padding: 1px 7px 9px; border: 1px solid var(--line); background: #e8f1fc; }
.doc-body { flex: 1; min-width: 0; background: #fff; }
.doc-scroll { width: 17px; margin-top: 6px; display: flex; flex-direction: column; align-items: center; background: #d0e1f7; color: #3a4c66; }
.doc-scroll i { flex: 1; width: 100%; margin-top: 80px; margin-bottom: 6px; border: 1px solid var(--line); background: linear-gradient(#6b93cf 0 1px, transparent 1px 2px, #6b93cf 2px 3px, transparent 3px 4px, #6b93cf 4px 5px) center / 8px 5px no-repeat, linear-gradient(90deg, #f4f8fe, #e4eefb 45%, #cfdff3 46%, #dbe8f8); }
.doc-scroll .up { transform: rotate(180deg); margin-top: 7px; }
.doc-scroll svg:last-child { margin-bottom: 6px; }
.section { display: flex; gap: 6px; padding: 0 4px 0 5px; }
.section .box { flex: 1; }
.grid { height: 103px; margin-bottom: -1px; border: 1px solid #a6a6a6; background: #fff; overflow: hidden; }
.section + .bar { margin-top: 4px; }
.bar {
  display: flex; align-items: center; gap: 2px; height: 31px; padding-left: 5px; margin-bottom: 4px;
  border: 1px solid var(--line); color: #1c3f80; font-weight: 700;
  background: linear-gradient(#deebfe 0, #c8defd 12px, #aecffc 13px, #bbd7fe 30px);
}
.bar-on { color: #3d3f4a; background: linear-gradient(#ffd2a0 0, #fdb870 12px, #fda93a 13px, #ffdc70 30px); }
.inset { margin: 0 4px 5px 5px; }
.actions { display: flex; flex-direction: column; gap: 6px; padding-right: 1px; }
.one { width: 74px; padding-top: 23px; }
.pair { width: 104px; padding-top: 35px; }
.btn { height: 21px; border: 1px solid #a8a8a8; background: #e1e1e1; color: var(--ink); white-space: nowrap; }
.sel { width: 30px; }
.c100 { width: 100px; }
.c104 { width: 104px; }
.c109 { width: 109px; }
.c115 { width: 115px; }
.c121 { width: 121px; }
.lined th, .lined td { border-right: 1px solid #e2e2e2; border-bottom: 1px solid #e2e2e2; }
.lined tr > :first-child { border-bottom-color: #fff; }
.lined tr > :last-child { border-right: 0; }
.plain td:first-child { border-right: 1px solid #e2e2e2; }
.plain tr > :last-child { border-right: 0; }
.wide { width: 1351px; }
.cell-on { background: #a0a0a0; color: #fff; }
.row-on { background: #a0a0a0; color: #fff; }
.scrolled { display: grid; grid-template-columns: minmax(0, 1fr) 16px; grid-template-rows: minmax(0, 1fr) auto; }
.view { overflow: hidden; }
.vscroll { display: flex; flex-direction: column; align-items: center; padding: 6px 0 4px; background: #f0f0f0; }
.thumb-v { width: 16px; height: 26px; margin-top: 4px; background: #cdcdcd; }
.down { margin-top: auto; transform: rotate(180deg); }
.hscroll { display: flex; align-items: center; height: 15px; padding: 0 3px; background: #f0f0f0; }
.thumb-h { width: 671px; height: 15px; margin-left: 4px; background: #cdcdcd; }
.left { transform: rotate(-90deg); }
.right { margin-left: auto; transform: rotate(90deg); }

/* events tree */
.node { display: flex; align-items: center; gap: 2px; height: 18px; padding-left: 5px; background: #a0a0a0; color: #fff; }
.node i { width: 5px; border-top: 1px dotted #666; }
.leaves { list-style: none; margin: 0; padding: 0 0 0 28px; }
.leaves li { position: relative; height: 18px; line-height: 18px; padding-left: 13px; white-space: nowrap; border-left: 1px dotted #888; }
.leaves li::before { content: ""; position: absolute; left: 0; top: 9px; width: 11px; border-top: 1px dotted #888; }
.leaves li:last-child { border-image: linear-gradient(#888 50%, transparent 50%) 1; }

/* well specs */
.lower { height: 215px; margin-right: 1px; }
.specs { flex: 1; min-height: 0; border-bottom: 0; padding-left: 4px; }
.lower > .specs { height: 112px; flex: none; overflow: hidden; }
.lower .grid { border-bottom: 0; height: 94px; margin: 0; }
.short { padding-bottom: 0; }
.tree-row { display: flex; align-items: center; gap: 2px; height: 18px; padding-left: 3px; }
.tree-row i { width: 5px; border-top: 1px dotted #888; }
.tree-row svg { color: #222; }
.depth1 { padding-left: 23px; }
.depth2 {
  padding-left: 47px;
  background:
    repeating-linear-gradient(#888 0 1px, transparent 1px 2px) 26px 0 / 1px 100% no-repeat,
    repeating-linear-gradient(#888 0 1px, transparent 1px 2px) 46px 0 / 1px 100% no-repeat;
}
.depth2 i { width: 10px; }
.panel-tabs { display: flex; align-items: flex-start; height: 28px; padding-left: 4px; border-top: 1px solid var(--line); background: #dbe1ea; }
.ptab { display: flex; align-items: center; gap: 2px; height: 25px; padding: 0 7px 0 4px; color: #5a79a8; }
.ptab-on { height: 25px; padding-right: 8px; border: 1px solid #6fa0e0; border-top: 0; border-radius: 0 0 3px 3px; background: #e8f1fd; color: var(--ink); }
.ptab-nav { display: flex; gap: 12px; margin-left: auto; padding: 8px 12px 0 0; color: #555; }

.status { height: 21px; padding: 4px; line-height: 14px; background: #f0f0f0; color: var(--ink); }
```
